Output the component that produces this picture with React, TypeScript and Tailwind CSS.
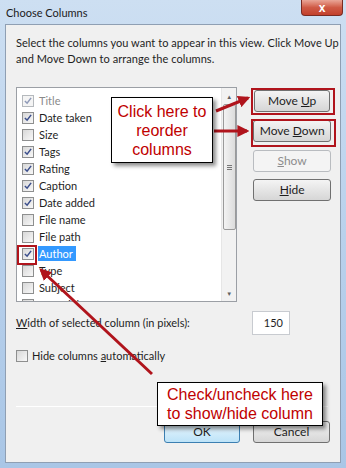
import React from "react";

const items: { label: string; checked: boolean; disabled?: boolean; selected?: boolean }[] = [
  { label: "Title", checked: true, disabled: true },
  { label: "Date taken", checked: true },
  { label: "Size", checked: false },
  { label: "Tags", checked: true },
  { label: "Rating", checked: true },
  { label: "Caption", checked: true },
  { label: "Date added", checked: true },
  { label: "File name", checked: false },
  { label: "File path", checked: false },
  { label: "Author", checked: true, selected: true },
  { label: "Type", checked: false },
  { label: "Subject", checked: false },
  { label: "Copyright", checked: false },
];

function Check({ checked, disabled }: { checked: boolean; disabled?: boolean }) {
  return (
    <div
      className={`size-[12px] shrink-0 border grid place-items-center ${
        disabled ? "border-[#b5b9bd] bg-[#f4f4f4]" : "border-[#8e8f8f] bg-gradient-to-br from-[#d8d8d8] to-[#f8f8f8]"
      }`}
    >
      {checked && (
        <svg width="8" height="8" viewBox="0 0 9 9">
          <path
            d="M1 4.5 L3.5 7 L8 1"
            fill="none"
            stroke={disabled ? "#8f9ab8" : "#3c4f8c"}
            strokeWidth="1.7"
          />
        </svg>
      )}
    </div>
  );
}

function Btn({
  children,
  disabled,
  def,
  className = "",
}: {
  children: React.ReactNode;
  disabled?: boolean;
  def?: boolean;
  className?: string;
}) {
  const look = disabled
    ? "border-[#b9bcc0] bg-[#f4f4f4] text-[#8d8d8d]"
    : def
    ? "border-[#3c7fb1] bg-gradient-to-b from-[#ecf7fd] to-[#bde3f8] text-[#1e1e1e]"
    : "border-[#707070] bg-gradient-to-b from-[#f4f4f4] to-[#d6d6d6] text-[#1e1e1e]";
  return (
    <div
      className={`h-[22px] rounded-[3px] border grid place-items-center text-[12px] ${look} ${className}`}
    >
      {children}
    </div>
  );
}

export default function App() {
  return (
    <div
      className="relative w-[346px] h-[468px] overflow-hidden bg-gradient-to-b from-[#cddff2] via-[#b9d1ec] to-[#a9c6e6]"
      style={{ fontFamily: 'Lato, "Noto Sans", sans-serif' }}
    >
      {/* title bar */}
      <div className="h-[24px] flex items-start">
        <div className="pl-[6px] pt-[5px] text-[11px] text-[#1b1b1b]">Choose Columns</div>
        <div className="ml-auto mr-[3px] w-[42px] h-[16px] rounded-b-[4px] border border-t-0 border-[#7a2b22] bg-gradient-to-b from-[#e9a597] via-[#cf5a45] to-[#c2402c] grid place-items-center">
          <span className="text-white font-bold text-[12px] leading-none" style={{ fontFamily: '"Liberation Sans", sans-serif' }}>
            x
          </span>
        </div>
      </div>

      {/* client area */}
      <div className="mx-[5px] h-[439px] bg-[#f0f0f0] border border-[#8f9fb3] pl-[10px] pr-[8px] text-[11px] text-[#1e1e1e]">
        <p className="pt-[10px] mr-[-8px] text-[11px] leading-[16px] tracking-[0.05px]">
          Select the columns you want to appear in this view. Click Move Up and Move Down to arrange the columns.
        </p>

        <div className="mt-[20px] flex">
          {/* list */}
          <div className="w-[222px] h-[215px] border border-[#9b9fa5] bg-white flex overflow-hidden">
            <div className="flex-1 pt-[4px] pl-[5px]">
              {items.map((it) => (
                <div key={it.label} className="h-[17px] flex items-center gap-[4px]">
                  <Check checked={it.checked} disabled={it.disabled} />
                  <span
                    className={`px-[1px] leading-[15px] ${
                      it.selected ? "bg-[#3399ff] text-white pr-[3px]" : it.disabled ? "text-[#8a8a8a]" : ""
                    }`}
                  >
                    {it.label}
                  </span>
                </div>
              ))}
            </div>
            {/* scrollbar */}
            <div className="w-[15px] h-full bg-[#f2f2f2] border-l border-[#e6e6e6] flex flex-col items-center">
              <div className="h-[16px] grid place-items-center text-[6px] text-[#606060]">▲</div>
              <div className="w-[13px] h-[126px] rounded-[2px] border border-[#9a9a9a] bg-gradient-to-r from-[#f3f3f3] to-[#dcdcdc] flex flex-col items-center justify-center gap-[1px]">
                <div className="w-[5px] h-px bg-[#777]" />
                <div className="w-[5px] h-px bg-[#777]" />
                <div className="w-[5px] h-px bg-[#777]" />
              </div>
              <div className="mt-auto h-[16px] grid place-items-center text-[6px] text-[#606060]">▼</div>
            </div>
          </div>

          {/* right buttons */}
          <div className="ml-[15px] w-[80px] flex flex-col pt-[3px]">
            <Btn className="mx-[2px]">
              <span>
                Move <u>U</u>p
              </span>
            </Btn>
            <Btn className="mx-[1px] mt-[8px]">
              <span>
                Move <u>D</u>own
              </span>
            </Btn>
            <Btn disabled className="mt-[8px] mx-[1px]">
              <span>
                <u>S</u>how
              </span>
            </Btn>
            <Btn className="mt-[7px] mx-[1px]">
              <span>
                <u>H</u>ide
              </span>
            </Btn>
          </div>
        </div>

        <div className="mt-[9px] flex items-center">
          <span>
            <u>W</u>idth of selected column (in pixels):
          </span>
          <div className="ml-auto mr-[42px] w-[38px] h-[24px] border border-[#c8cbd0] bg-white flex items-center justify-end pr-[6px]">
            150
          </div>
        </div>

        <div className="mt-[13px] flex items-center gap-[4px]">
          <Check checked={false} />
          <span>
            Hide columns <u>a</u>utomatically
          </span>
        </div>

        <div className="mt-[41px] mr-[4px] h-px bg-[#c9c9c9] border-b border-white" />

        <div className="mt-[14px] flex justify-end gap-[13px] mr-[2px]">
          <Btn def className="w-[76px]">
            OK
          </Btn>
          <Btn className="w-[77px]">Cancel</Btn>
        </div>
      </div>

      {/* annotations */}
      <div className="absolute left-[17px] top-[245px] w-[20px] h-[20px] border-2 border-[#b0141c]" />
      <div className="absolute left-[251px] top-[88px] w-[84px] h-[27px] border-2 border-[#b0141c]" />
      <div className="absolute left-[251px] top-[119px] w-[85px] h-[28px] border-2 border-[#b0141c]" />

      <svg className="absolute inset-0 pointer-events-none" width="346" height="468">
        <defs>
          <marker id="ah" viewBox="0 0 10 10" refX="8" refY="5" markerWidth="4" markerHeight="4" orient="auto">
            <path d="M0 0 L10 5 L0 10 z" fill="#b0141c" />
          </marker>
        </defs>
        <line x1="216" y1="111" x2="248" y2="98" stroke="#b0141c" strokeWidth="3" markerEnd="url(#ah)" />
        <line x1="214" y1="131" x2="247" y2="131" stroke="#b0141c" strokeWidth="3" markerEnd="url(#ah)" />
        <line x1="152" y1="374" x2="41" y2="270" stroke="#b0141c" strokeWidth="3" markerEnd="url(#ah)" />
      </svg>

      <div
        className="absolute left-[111px] top-[97px] w-[102px] h-[66px] bg-white border border-black shadow-[3px_3px_4px_rgba(0,0,0,0.45)] flex flex-col items-center justify-center text-[16px] leading-[19px] text-[#c00000]"
        style={{ fontFamily: '"Liberation Sans", Arial, sans-serif' }}
      >
        <span>Click here to</span>
        <span>reorder</span>
        <span>columns</span>
      </div>

      <div
        className="absolute left-[157px] top-[382px] w-[166px] h-[44px] bg-white border border-black shadow-[3px_3px_4px_rgba(0,0,0,0.45)] flex flex-col items-center justify-center text-[16px] leading-[19px] text-[#c00000]"
        style={{ fontFamily: '"Liberation Sans", Arial, sans-serif' }}
      >
        <span>Check/uncheck here</span>
        <span>to show/hide column</span>
      </div>
    </div>
  );
}
